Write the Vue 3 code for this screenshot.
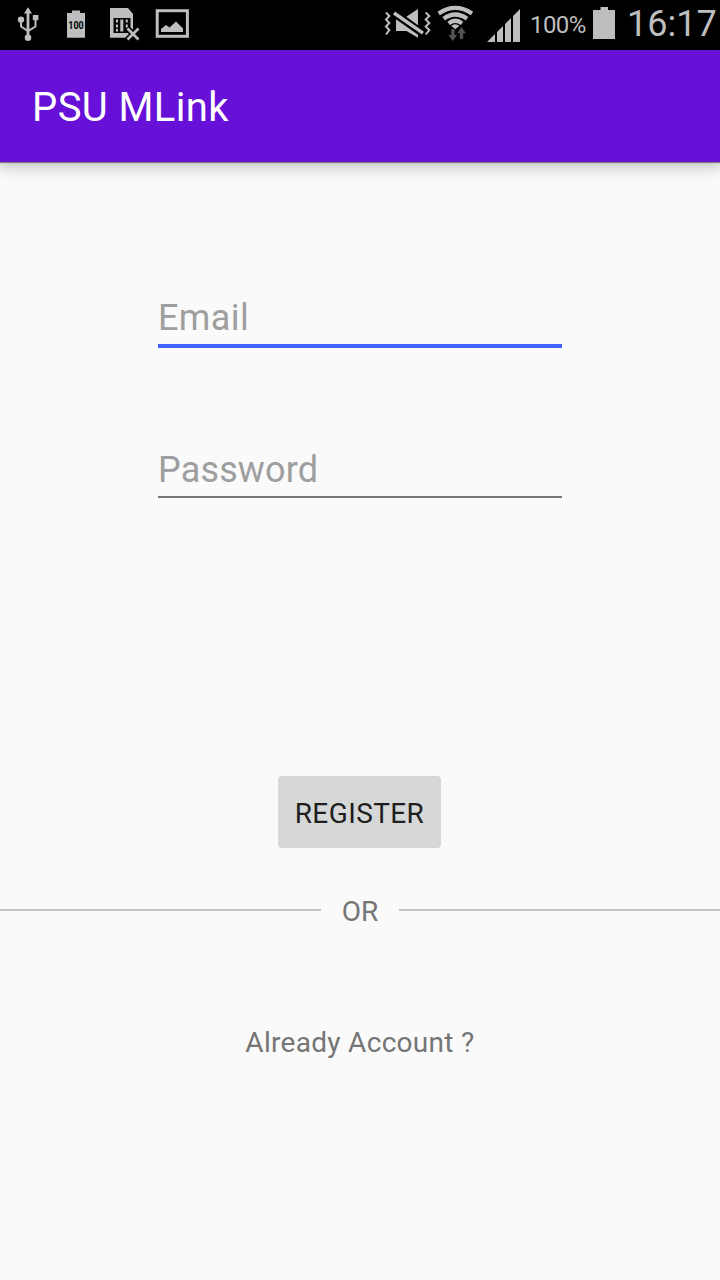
<script setup>
import { ref } from 'vue'

const email = ref('')
const password = ref('')
</script>

<template>
  <div class="screen">
    <header class="status">
      <svg class="notifications" width="200" height="50" viewBox="0 0 200 50" fill="#bebebe">
        <g stroke="#bebebe" fill="none" stroke-width="2">
          <path d="M28 12V37" stroke-width="2.8" />
          <path d="M21 20V26.5L28 31L35.5 26.5V18" />
        </g>
        <path d="M28 7.2L32 13.5H24Z" />
        <circle cx="28" cy="37.8" r="3.3" />
        <circle cx="21" cy="19.6" r="3.2" />
        <rect x="32.8" y="15" width="5.6" height="5.2" />
        <path d="M67 13H72V10.5H80V13H85V37.7H67Z" />
        <text x="68.3" y="29" textLength="15.4" lengthAdjust="spacingAndGlyphs" class="level">100</text>
        <path d="M110 8H128L133 14V37.7H110Z" />
        <path d="M113.5 18H130.5V33H113.5Z" fill="#080808" />
        <path d="M116 19.5h2v3h-2zM116 24.5h2v3h-2zM116 29h2v2.5h-2zM120.3 19.5h3v12h-3zM125.8 19.5h2v3h-2zM125.8 24.5h2v3h-2z" />
        <path d="M127.5 28.5L138.5 39.5M138.5 28.5L127.5 39.5" stroke="#000" stroke-width="6" />
        <path d="M127.5 28.5L138.5 39.5M138.5 28.5L127.5 39.5" stroke="#bebebe" stroke-width="2.7" />
        <rect x="157.2" y="10.7" width="30.2" height="25.6" fill="none" stroke="#bebebe" stroke-width="3" />
        <path d="M161 32V29L166 25L169.5 27.5L176 21.5L183 28.5V32Z" />
      </svg>
      <svg class="indicators" width="144" height="50" viewBox="380 0 144 50" fill="#bebebe">
        <path d="M386 12.5L389.3 16L386 19.5L389.3 23L386 26.5L389.3 30L386 34.5M425.7 12.5L429.3 16L425.7 19.5L429.3 23L425.7 26.5L429.3 30L425.7 34.5" fill="none" stroke="#bebebe" stroke-width="2" />
        <path d="M396 19.2V31H406.5L418 37.8V34.7ZM406.3 16.7L418 9V25.2Z" />
        <path d="M394 13L423 33.2" stroke="#bebebe" stroke-width="3.4" />
        <path d="M438.7 13.4Q455.3 2.2 472 13.4M443.7 18.7Q455.3 10.3 467 18.7M448.6 23.4Q455.3 18.1 462 23.4" fill="none" stroke="#bebebe" stroke-width="4.2" />
        <path d="M451.2 25.7Q455.3 22.7 459.4 25.7L455.3 29.2Z" />
        <path d="M451 29H454.8V34.7H457.6L452.8 41.5L448 34.7H451ZM459.6 39.3H463.4V33.5H466.3L461.5 26.7L456.7 33.5H459.6Z" fill="#555" stroke="#000" stroke-width=".5" />
        <path d="M487 42L495 34V42ZM497 32L503 26V42H497ZM505 24L511 18V42H505ZM513 16L520 9V42H513Z" />
      </svg>
      <span class="percent">100%</span>
      <svg class="battery" width="22" height="50" viewBox="0 0 22 50">
        <path d="M0 10H7.5V7H15V10H22V39H0Z" fill="#bebebe" />
      </svg>
      <time class="clock">16:17</time>
    </header>
    <div class="appbar"><h1>PSU MLink</h1></div>
    <main>
      <input v-model="email" class="field active" type="email" placeholder="Email">
      <input v-model="password" class="field" type="password" placeholder="Password">
      <button class="register"><span>REGISTER</span></button>
      <div class="divider"><span>OR</span></div>
      <p class="account">Already Account ?</p>
    </main>
  </div>
</template>

<style>
body { margin: 0; }
</style>

<style scoped>
.screen {
  width: 720px;
  height: 1280px;
  display: flex;
  flex-direction: column;
  overflow: hidden;
  background: #fafafa;
  font-family: Roboto, "Noto Sans", sans-serif;
}
.status {
  height: 50px;
  flex: none;
  display: flex;
  align-items: flex-start;
  background: #000;
  color: #bebebe;
  white-space: nowrap;
}
.status svg { flex: none; display: block; }
.level { font: bold 10px Roboto, sans-serif; fill: #000; }
.indicators { margin-left: 180px; }
.percent {
  width: 62px;
  margin-left: 6px;
  font-size: 24px;
  font-weight: 400;
  letter-spacing: -.6px;
  line-height: 50px;
}
.battery { margin-left: 1px; }
.clock {
  margin-left: 12px;
  font-size: 36px;
  font-weight: 400;
  line-height: 49px;
}
.appbar {
  height: 112px;
  flex: none;
  display: flex;
  align-items: center;
  padding-left: 32px;
  background: #6610d8;
  box-shadow: 0 1px 1px rgba(0, 0, 0, .4), 0 4px 14px 2px rgba(0, 0, 0, .2);
}
h1 {
  margin: 4px 0 0;
  color: #fff;
  font-size: 40px;
  font-weight: 400;
  letter-spacing: .4px;
  line-height: 48px;
}
main {
  display: flex;
  flex-direction: column;
  align-items: center;
  padding-top: 124px;
}
.field {
  box-sizing: border-box;
  width: 404px;
  height: 62px;
  padding: 8px 0 0;
  border: 0;
  border-bottom: 2px solid #757575;
  border-radius: 0;
  outline: 0;
  background: transparent;
  font: 400 36px/50px Roboto, sans-serif;
  letter-spacing: .15px;
}
.field.active {
  margin-bottom: 88px;
  padding-top: 6px;
  border-bottom: 4px solid #4263ff;
  letter-spacing: .4px;
}
.field::placeholder { color: #9e9e9e; opacity: 1; }
.register {
  width: 163px;
  height: 72px;
  margin: 278px 1px 0 0;
  padding: 4px 0 0;
  border: 0;
  border-radius: 4px;
  background: #d6d8d7;
  color: #1e1e1e;
  font: 400 28px/36px Roboto, sans-serif;
  letter-spacing: .4px;
  white-space: nowrap;
}
.divider {
  width: 720px;
  height: 34px;
  margin-top: 45px;
  display: flex;
  align-items: center;
  justify-content: center;
  color: #757575;
  font-size: 28px;
}
.divider::before, .divider::after {
  content: "";
  flex: 1;
  height: 2px;
  background: #c3c5c5;
}
.divider span { width: 78px; text-align: center; line-height: 34px; padding-top: 3px; }
.account {
  margin: 99px 0 0;
  color: #757575;
  font-size: 28px;
  letter-spacing: .3px;
  line-height: 34px;
}
</style>
